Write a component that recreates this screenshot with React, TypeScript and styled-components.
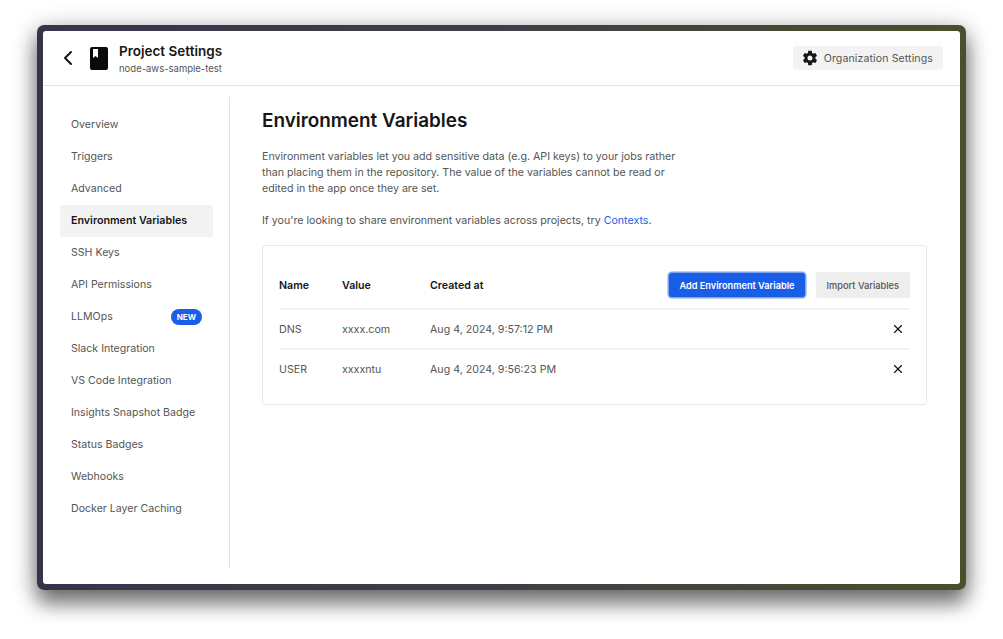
import React from "react";
import styled, { createGlobalStyle } from "styled-components";
import { ChevronLeft, X } from "lucide-react";
import { IoSettingsSharp } from "react-icons/io5";

const GlobalStyle = createGlobalStyle`
    html, body {
        margin: 0;
        height: 100%;
        background: #fff;
        font-family: Inter, "Liberation Sans", sans-serif;
        color: #161616;
    }
`;

const Page = styled.div`
    box-sizing: border-box;
    width: 1003px;
    height: 639px;
    padding: 25px 37px 49px 37px;
    overflow: hidden;
`;

const Frame = styled.div`
    box-sizing: border-box;
    height: 565px;
    padding: 6px;
    border-radius: 7px;
    background: linear-gradient(90deg, #35354a 0%, #3e3f45 50%, #4a4f2c 100%);
    box-shadow: 0 14px 20px rgba(0, 0, 0, 0.45), 0 4px 24px rgba(0, 0, 0, 0.32);
`;

const Screen = styled.div`
    height: 100%;
    background: #fff;
    border-radius: 3px;
    display: flex;
    flex-direction: column;
    overflow: hidden;
`;

const Header = styled.header`
    box-sizing: border-box;
    flex: 0 0 55px;
    display: flex;
    align-items: center;
    padding: 0 17px 0 13px;
    border-bottom: 1px solid #e3e3e3;
`;

const BackButton = styled.span`
    display: flex;
    width: 24px;
    margin-right: 10px;
    color: #161616;
`;

const TitleBlock = styled.div`
    margin-left: 11px;
    padding-top: 2px;
    display: flex;
    flex-direction: column;
    gap: 3px;
`;

const ProjectTitle = styled.div`
    font-size: 13.5px;
    line-height: 17px;
    font-weight: 600;
`;

const ProjectSlug = styled.div`
    font-size: 9.5px;
    line-height: 12px;
    color: #555;
`;

const OrgButton = styled.div`
    margin-left: auto;
    height: 24px;
    padding: 0 10px 0 9px;
    display: flex;
    align-items: center;
    gap: 6px;
    background: #f3f3f3;
    border-radius: 3px;
    font-size: 10.6px;
    letter-spacing: 0.1px;
    color: #555;
`;

const Body = styled.div`
    flex: 1;
    display: flex;
    padding: 11px 0 16px 17px;
    min-height: 0;
`;

const Sidebar = styled.nav`
    box-sizing: border-box;
    flex: 0 0 170px;
    padding: 12px 16px 0 0;
    border-right: 1px solid #e3e3e3;
    display: flex;
    flex-direction: column;
`;

const NavItem = styled.div<{ $active?: boolean }>`
    flex: 0 0 32px;
    padding: 0 11px 1px;
    box-sizing: border-box;
    display: flex;
    align-items: center;
    justify-content: space-between;
    border-radius: 2px;
    font-size: ${(p) => (p.$active ? "10.7px" : "10.6px")};
    font-weight: ${(p) => (p.$active ? 600 : 400)};
    color: ${(p) => (p.$active ? "#161616" : "#555")};
    background: ${(p) => (p.$active ? "#f3f3f3" : "transparent")};
`;

const NewBadge = styled.span`
    padding: 0 6px;
    height: 16px;
    line-height: 16px;
    border-radius: 8px;
    background: #1a5ee8;
    color: #fff;
    font-size: 8px;
    font-weight: 700;
`;

const Main = styled.main`
    flex: 1;
    padding: 12px 33px 0 32px;
`;

const Heading = styled.h1`
    margin: 0 0 16px;
    font-size: 18.9px;
    line-height: 24px;
    font-weight: 600;
`;

const Paragraph = styled.p<{ $wide?: boolean }>`
    margin: 0 0 16px;
    max-width: ${(p) => (p.$wide ? "none" : "425px")};
    font-size: 10.65px;
    line-height: 16px;
    color: #555;
`;

const BlueLink = styled.a`
    color: #1a5ee8;
`;

const Card = styled.section`
    box-sizing: border-box;
    height: 160px;
    margin-top: 0;
    padding: 16px 16px 0;
    border: 1px solid #e8e8e8;
    border-radius: 3px;
`;

const Row = styled.div<{ $height: number; $rule?: boolean; $head?: boolean }>`
    box-sizing: border-box;
    height: ${(p) => p.$height}px;
    display: grid;
    grid-template-columns: 63px 88px 1fr;
    align-items: center;
    border-bottom: ${(p) => (p.$rule ? "2px solid #f3f3f3" : "0")};
    font-size: 10.65px;
    font-weight: ${(p) => (p.$head ? 600 : 400)};
    color: ${(p) => (p.$head ? "#161616" : "#555")};
`;

const HeadActions = styled.div`
    display: flex;
    align-items: center;
    gap: 11px;
`;

const CreatedLabel = styled.span`
    margin-right: auto;
`;

const PrimaryButton = styled.div`
    height: 24px;
    padding: 0 10px;
    display: flex;
    align-items: center;
    background: #1a5ee8;
    color: #fff;
    font-size: 9.2px;
    font-weight: 600;
    border-radius: 3px;
    box-shadow: 0 0 0 1.5px #7ea6ee;
`;

const SecondaryButton = styled.div`
    height: 26px;
    padding: 0 11px;
    display: flex;
    align-items: center;
    background: #eeeeee;
    color: #555;
    font-size: 9.25px;
    font-weight: 500;
    border-radius: 2px;
`;

const RemoveCell = styled.div`
    display: flex;
    justify-content: space-between;
    align-items: center;
    padding-right: 5px;
`;

const RemoveIcon = styled(X)`
    color: #111;
`;

const navItems = [
    "Overview",
    "Triggers",
    "Advanced",
    "Environment Variables",
    "SSH Keys",
    "API Permissions",
    "LLMOps",
    "Slack Integration",
    "VS Code Integration",
    "Insights Snapshot Badge",
    "Status Badges",
    "Webhooks",
    "Docker Layer Caching",
];

const variables = [
    { name: "DNS", value: "xxxx.com", created: "Aug 4, 2024, 9:57:12 PM" },
    { name: "USER", value: "xxxxntu", created: "Aug 4, 2024, 9:56:23 PM" },
];

const BookIcon = () => (
    <svg width="18" height="23" viewBox="0 0 18 23">
        <path
            fill="#0a0a0a"
            fillRule="evenodd"
            d="M2 0h14a2 2 0 0 1 2 2v19a2 2 0 0 1-2 2H2a2 2 0 0 1-2-2V2a2 2 0 0 1 2-2zM3 2v9l2.5-2L8 11V2z"
        />
    </svg>
);

export default function App() {
    return (
        <Page>
            <GlobalStyle />
            <Frame>
                <Screen>
                    <Header>
                        <BackButton>
                            <ChevronLeft size={24} strokeWidth={2} />
                        </BackButton>
                        <BookIcon />
                        <TitleBlock>
                            <ProjectTitle>Project Settings</ProjectTitle>
                            <ProjectSlug>node-aws-sample-test</ProjectSlug>
                        </TitleBlock>
                        <OrgButton>
                            <IoSettingsSharp size={16} color="#161616" />
                            Organization Settings
                        </OrgButton>
                    </Header>
                    <Body>
                        <Sidebar>
                            {navItems.map((item) => (
                                <NavItem key={item} $active={item === "Environment Variables"}>
                                    {item}
                                    {item === "LLMOps" && <NewBadge>NEW</NewBadge>}
                                </NavItem>
                            ))}
                        </Sidebar>
                        <Main>
                            <Heading>Environment Variables</Heading>
                            <Paragraph>
                                Environment variables let you add sensitive data (e.g. API keys) to your jobs rather
                                than placing them in the repository. The value of the variables cannot be read or
                                edited in the app once they are set.
                            </Paragraph>
                            <Paragraph $wide>
                                If you're looking to share environment variables across projects, try{" "}
                                <BlueLink>Contexts</BlueLink>.
                            </Paragraph>
                            <Card>
                                <Row $height={48} $rule $head>
                                    <span>Name</span>
                                    <span>Value</span>
                                    <HeadActions>
                                        <CreatedLabel>Created at</CreatedLabel>
                                        <PrimaryButton>Add Environment Variable</PrimaryButton>
                                        <SecondaryButton>Import Variables</SecondaryButton>
                                    </HeadActions>
                                </Row>
                                {variables.map((v, i) => (
                                    <Row key={v.name} $height={i === 0 ? 40 : 38} $rule={i === 0}>
                                        <span>{v.name}</span>
                                        <span>{v.value}</span>
                                        <RemoveCell>
                                            {v.created}
                                            <RemoveIcon size={14} strokeWidth={2} />
                                        </RemoveCell>
                                    </Row>
                                ))}
                            </Card>
                        </Main>
                    </Body>
                </Screen>
            </Frame>
        </Page>
    );
}
